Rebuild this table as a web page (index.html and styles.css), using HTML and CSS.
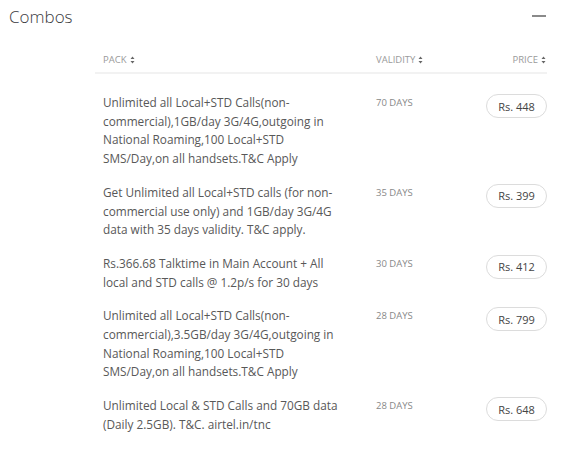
FILE: index.html
```html
<!DOCTYPE html>
<html>
<head>
<meta charset="utf-8">
<link rel="stylesheet" href="styles.css">
</head>
<body>
<section class="combos">
  <header class="head">
    <h2 class="title">Combos</h2>
    <span class="collapse"></span>
  </header>
  <div class="table">
    <div class="thead">
      <div class="th th-pack">PACK <svg class="sort" width="5" height="8" viewBox="0 0 5 8"><path d="M2.5 0.5L4.5 3H0.5z M2.5 7.5L0.5 5H4.5z" fill="#666"/></svg></div>
      <div class="th th-val">VALIDITY <svg class="sort" width="5" height="8" viewBox="0 0 5 8"><path d="M2.5 0.5L4.5 3H0.5z M2.5 7.5L0.5 5H4.5z" fill="#666"/></svg></div>
      <div class="th th-price">PRICE <svg class="sort" width="5" height="8" viewBox="0 0 5 8"><path d="M2.5 0.5L4.5 3H0.5z M2.5 7.5L0.5 5H4.5z" fill="#666"/></svg></div>
    </div>
    <div class="tbody">
      <div class="row">
        <div class="pack">Unlimited all Local+STD Calls(non-<br>commercial),1GB/day 3G/4G,outgoing in<br>National Roaming,100 Local+STD<br>SMS/Day,on all handsets.T&amp;C Apply</div>
        <div class="val">70 DAYS</div>
        <div class="price"><span class="pill">Rs. 448</span></div>
      </div>
      <div class="row">
        <div class="pack">Get Unlimited all Local+STD calls (for non-<br>commercial use only) and 1GB/day 3G/4G<br>data with 35 days validity. T&amp;C apply.</div>
        <div class="val">35 DAYS</div>
        <div class="price"><span class="pill">Rs. 399</span></div>
      </div>
      <div class="row">
        <div class="pack">Rs.366.68 Talktime in Main Account + All<br>local and STD calls @ 1.2p/s for 30 days</div>
        <div class="val">30 DAYS</div>
        <div class="price"><span class="pill">Rs. 412</span></div>
      </div>
      <div class="row">
        <div class="pack">Unlimited all Local+STD Calls(non-<br>commercial),3.5GB/day 3G/4G,outgoing in<br>National Roaming,100 Local+STD<br>SMS/Day,on all handsets.T&amp;C Apply</div>
        <div class="val">28 DAYS</div>
        <div class="price"><span class="pill">Rs. 799</span></div>
      </div>
      <div class="row">
        <div class="pack">Unlimited Local &amp; STD Calls and 70GB data<br>(Daily 2.5GB). T&amp;C. airtel.in/tnc</div>
        <div class="val">28 DAYS</div>
        <div class="price"><span class="pill">Rs. 648</span></div>
      </div>
    </div>
  </div>
</section>
</body>
</html>
```
FILE: styles.css
```css
* { box-sizing: border-box; }
body {
  margin: 0;
  background: #fff;
  font-family: "Open Sans", "Liberation Sans", sans-serif;
  color: #555;
}
.combos {
  padding: 3px 22px 0 9px;
}
.head {
  display: flex;
  align-items: center;
  justify-content: space-between;
  height: 26px;
}
.title {
  margin: 0;
  font-size: 17px;
  font-weight: 300;
  color: #3a3a40;
}
.collapse {
  display: block;
  width: 14px;
  height: 2px;
  background: #8a8a8a;
  margin-right: 1px;
}
.table {
  margin: 22px 0 0 86px;
}
.thead {
  display: grid;
  grid-template-columns: 281px 1fr auto;
  align-items: center;
  height: 23px;
  border-bottom: 2px solid #f2f2f2;
  padding-bottom: 4px;
  font-size: 9.5px;
  color: #9a9a9a;
}
.th { display: flex; align-items: center; gap: 3px; }
.th-pack { padding-left: 8px; }
.th-price { justify-content: flex-end; padding-right: 1px; }
.sort { display: block; }
.tbody { padding-top: 11px; }
.row {
  display: grid;
  grid-template-columns: 281px 1fr auto;
  padding: 8px 0 7px;
  align-items: start;
}
.pack {
  padding-left: 8px;
  font-size: 11.8px;
  line-height: 18.7px;
  white-space: nowrap;
  color: #585858;
}
.val {
  font-size: 9.5px;
  line-height: 18.7px;
  color: #888;
  padding-top: 1px;
}
.pill {
  display: inline-flex;
  align-items: center;
  justify-content: center;
  width: 61px;
  height: 24px;
  margin-top: 1px;
  border: 1px solid #dcdcdc;
  border-radius: 12px;
  font-size: 11px;
  color: #444;
}
```
